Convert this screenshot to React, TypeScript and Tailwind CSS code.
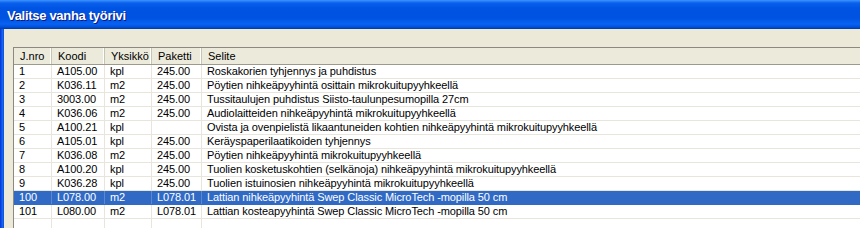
const rows = [
  ["1", "A105.00", "kpl", "245.00", "Roskakorien tyhjennys ja puhdistus"],
  ["2", "K036.11", "m2", "245.00", "Pöytien nihkeäpyyhintä osittain mikrokuitupyyhkeellä"],
  ["3", "3003.00", "m2", "245.00", "Tussitaulujen puhdistus Siisto-taulunpesumopilla 27cm"],
  ["4", "K036.06", "m2", "245.00", "Audiolaitteiden nihkeäpyyhintä mikrokuitupyyhkeellä"],
  ["5", "A100.21", "kpl", "", "Ovista ja ovenpielistä likaantuneiden kohtien nihkeäpyyhintä mikrokuitupyyhkeellä"],
  ["6", "A105.01", "kpl", "245.00", "Keräyspaperilaatikoiden tyhjennys"],
  ["7", "K036.08", "m2", "245.00", "Pöytien nihkeäpyyhintä mikrokuitupyyhkeellä"],
  ["8", "A100.20", "kpl", "245.00", "Tuolien kosketuskohtien (selkänoja) nihkeäpyyhintä mikrokuitupyyhkeellä"],
  ["9", "K036.28", "kpl", "245.00", "Tuolien istuinosien nihkeäpyyhintä mikrokuitupyyhkeellä"],
  ["100", "L078.00", "m2", "L078.01", "Lattian nihkeäpyyhintä Swep Classic MicroTech -mopilla 50 cm"],
  ["101", "L080.00", "m2", "L078.01", "Lattian kosteapyyhintä Swep Classic MicroTech -mopilla 50 cm"],
];

const headers = ["J.nro", "Koodi", "Yksikkö", "Paketti", "Selite"];
const widths = ["w-[38px]", "w-[53px]", "w-[47px]", "w-[50px]", "flex-1"];
const selected = 9;

export default function App() {
  return (
    <div className="w-[860px] h-[228px] overflow-hidden bg-[#ECE9D8] flex flex-col font-['Liberation_Sans',Arial,sans-serif] text-[11px] text-black">
      {/* title bar */}
      <div className="h-[29px] shrink-0 flex items-center pl-[7px] bg-[linear-gradient(to_bottom,#3D95FF_0px,#0A5FEC_3px,#0054E3_8px,#0052E0_18px,#0862F2_24px,#0051DA_27px,#0039A0_29px)]">
        <span className="text-white font-bold text-[13px] tracking-[-0.3px] [text-shadow:1px_1px_0_#0A1883] pt-[3px]">
          Valitse vanha työrivi
        </span>
      </div>

      <div className="flex-1 flex min-h-0">
        {/* left window frame */}
        <div className="w-[4px] shrink-0 bg-[linear-gradient(to_right,#0831D9,#0D4EE4,#166AEE,#0A4BD8)]" />

        <div className="flex-1 pl-[9px] pt-[18px] min-w-0">
          <div className="h-full bg-white border-t border-l border-[#8C8A80] flex flex-col">
            {/* header */}
            <div className="h-[17px] shrink-0 flex bg-[#EBEADB] border-b border-[#9D9A8C]">
              {headers.map((h, i) => (
                <div
                  key={h}
                  className={`${widths[i]} shrink-0 flex items-center pl-[6px] border-r border-[#C7C5B2] shadow-[inset_-1px_0_0_#FFFFFF] ${i === 4 ? "border-r-0 shadow-none" : ""}`}
                >
                  {h}
                </div>
              ))}
            </div>

            {/* rows */}
            {rows.map((r, ri) => {
              const sel = ri === selected;
              return (
                <div
                  key={ri}
                  className={`h-[14px] shrink-0 flex border-b tracking-[-0.1px] ${sel ? "bg-[#316AC5] text-white border-[#316AC5]" : "border-[#E8E6DC]"}`}
                >
                  {r.map((c, ci) => (
                    <div
                      key={ci}
                      className={`${widths[ci]} shrink-0 flex items-center pl-[5px] whitespace-nowrap overflow-hidden leading-[13px] ${ci < 4 ? (sel ? "border-r border-[#5A88D2]" : "border-r border-[#E8E6DC]") : ""}`}
                    >
                      {c}
                    </div>
                  ))}
                </div>
              );
            })}
            <div className="flex-1 flex">
              {widths.slice(0, 4).map((w, i) => (
                <div key={i} className={`${w} shrink-0 border-r border-[#E8E6DC]`} />
              ))}
            </div>
          </div>
        </div>
      </div>
    </div>
  );
}
